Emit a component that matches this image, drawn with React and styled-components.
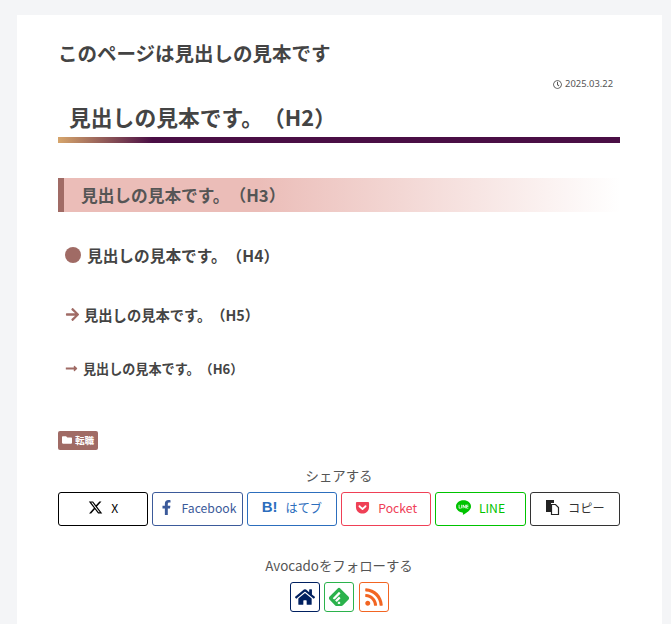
import styled, { createGlobalStyle } from 'styled-components';
import { FaHome, FaRss, FaFacebookF, FaGetPocket, FaRegClock, FaFolder, FaArrowRight, FaLongArrowAltRight } from 'react-icons/fa';
import { FaXTwitter } from 'react-icons/fa6';
import { SiLine, SiFeedly } from 'react-icons/si';

const GlobalStyle = createGlobalStyle`
  html, body {
    margin: 0;
    padding: 0;
    background: #f4f5f7;
  }
  body {
    font-family: "Noto Sans CJK JP", "Noto Sans", sans-serif;
    color: #444;
    text-spacing-trim: space-all;
  }
`;

const Page = styled.div`
  height: 624px;
  padding: 15px 9px 0 17px;
  overflow: hidden;
  box-sizing: border-box;
`;

const Card = styled.main`
  background: #fff;
  height: 609px;
  padding: 21px 42px 0 41px;
  box-sizing: border-box;
`;

const Title = styled.h1`
  margin: 0;
  font-size: 19.5px;
  line-height: 33px;
  font-weight: 700;
  color: #444;
`;

const DateRow = styled.div`
  display: flex;
  justify-content: flex-end;
  align-items: center;
  gap: 3px;
  margin-top: 8px;
  padding-right: 7px;
  font-size: 9.4px;
  line-height: 14px;
  color: #555;
  font-family: "Noto Sans", sans-serif;
  svg { font-size: 9px; }
`;

const H2 = styled.h2`
  margin: 9px 0 0;
  padding: 0 0 4px 11px;
  font-size: 21.8px;
  line-height: 33px;
  font-weight: 700;
  border-bottom: 6px solid;
  border-image: linear-gradient(100deg, #e3b36f 0%, #4a0e45 18%, #4a0e45 100%) 1;
`;

const H3 = styled.h3`
  margin: 35px 0 0;
  height: 34px;
  display: flex;
  align-items: center;
  padding: 0 0 1px 17px;
  box-sizing: border-box;
  border-left: 6px solid #a06b65;
  background: linear-gradient(90deg, #ebbdb8 0%, #ebbdb8 35%, #ffffff 100%);
  font-size: 16.7px;
  font-weight: 700;
  color: #555;
`;

const MarkedHeading = styled.div`
  display: flex;
  align-items: center;
  font-weight: 700;
  font-size: ${({ $size }) => $size}px;
  gap: ${({ $gap }) => $gap}px;
  margin-top: ${({ $top }) => $top}px;
  padding-left: 7px;
  height: 24px;
  color: #444;
  svg { color: #a06b65; flex: none; }
`;

const Dot = styled.span`
  width: 16px;
  height: 16px;
  border-radius: 50%;
  background: #a06b65;
  flex: none;
`;

const CategoryRow = styled.div`
  margin-top: 51px;
  display: flex;
`;

const Category = styled.span`
  display: inline-flex;
  align-items: center;
  gap: 3px;
  height: 19px;
  box-sizing: border-box;
  padding: 0 4px 2px;
  background: #a06b65;
  color: #fff;
  border-radius: 2px;
  font-size: 9.6px;
  font-weight: 700;
  svg { font-size: 10px; }
`;

const Caption = styled.div`
  text-align: center;
  font-size: 13.4px;
  line-height: 20px;
  color: #555;
  margin-top: ${({ $top }) => $top}px;
`;

const ShareGrid = styled.div`
  display: grid;
  grid-template-columns: repeat(6, 1fr);
  gap: 4px;
  margin-top: 7px;
`;

const ShareButton = styled.a`
  height: 34px;
  box-sizing: border-box;
  border: 1px solid ${({ $color }) => $color};
  border-radius: 3px;
  color: ${({ $color }) => $color};
  display: flex;
  align-items: center;
  justify-content: center;
  gap: 8px;
  padding-bottom: 2px;
  font-size: 12.2px;
  white-space: nowrap;
  svg { font-size: 15px; flex: none; position: relative; top: -1px; }
`;

const HatenaMark = styled.b`
  font-family: "Liberation Sans", sans-serif;
  font-size: 15px;
  line-height: 15px;
  position: relative;
  top: -2px;
`;

const FollowRow = styled.div`
  display: flex;
  justify-content: center;
  gap: 4.5px;
  margin-top: 7px;
`;

const FollowButton = styled.a`
  width: 30px;
  height: 30px;
  box-sizing: border-box;
  border: 1px solid ${({ $color }) => $color};
  border-radius: 3px;
  color: ${({ $color }) => $color};
  display: flex;
  align-items: center;
  justify-content: center;
  svg { font-size: 20px; }
`;

const CopyIcon = () => (
  <svg width="15" height="16" viewBox="0 0 15 16">
    <path d="M1 1h8v3H6v9H1z" fill="#222" />
    <path d="M6.5 5.5h4l3 3v7h-7z" fill="#fff" stroke="#222" strokeWidth="1.2" />
  </svg>
);

const shares = [
  { label: 'X', color: '#000', icon: <FaXTwitter /> },
  { label: 'Facebook', color: '#3b5a9a', icon: <FaFacebookF /> },
  { label: 'はてブ', color: '#2c6ebd', icon: <HatenaMark>B!</HatenaMark> },
  { label: 'Pocket', color: '#ef4056', icon: <FaGetPocket /> },
  { label: 'LINE', color: '#00c300', icon: <SiLine /> },
  { label: 'コピー', color: '#333', icon: <CopyIcon /> },
];

export default function App() {
  return (
    <Page>
      <GlobalStyle />
      <Card>
        <Title>このページは見出しの見本です</Title>
        <DateRow><FaRegClock />2025.03.22</DateRow>
        <H2>見出しの見本です。（H2）</H2>
        <H3>見出しの見本です。（H3）</H3>
        <MarkedHeading $size={15.7} $gap={6} $top={31}><Dot />見出しの見本です。（H4）</MarkedHeading>
        <MarkedHeading $size={14.3} $gap={4} $top={35}><FaArrowRight size={15} />見出しの見本です。（H5）</MarkedHeading>
        <MarkedHeading $size={13.1} $gap={5} $top={30}><FaLongArrowAltRight size={13} />見出しの見本です。（H6）</MarkedHeading>
        <CategoryRow><Category><FaFolder />転職</Category></CategoryRow>
        <Caption $top={15}>シェアする</Caption>
        <ShareGrid>
          {shares.map((s) => (
            <ShareButton key={s.label} $color={s.color}>{s.icon}{s.label}</ShareButton>
          ))}
        </ShareGrid>
        <Caption $top={29}>Avocadoをフォローする</Caption>
        <FollowRow>
          <FollowButton $color="#002060"><FaHome /></FollowButton>
          <FollowButton $color="#2bb24c"><SiFeedly /></FollowButton>
          <FollowButton $color="#f26522"><FaRss /></FollowButton>
        </FollowRow>
      </Card>
    </Page>
  );
}
